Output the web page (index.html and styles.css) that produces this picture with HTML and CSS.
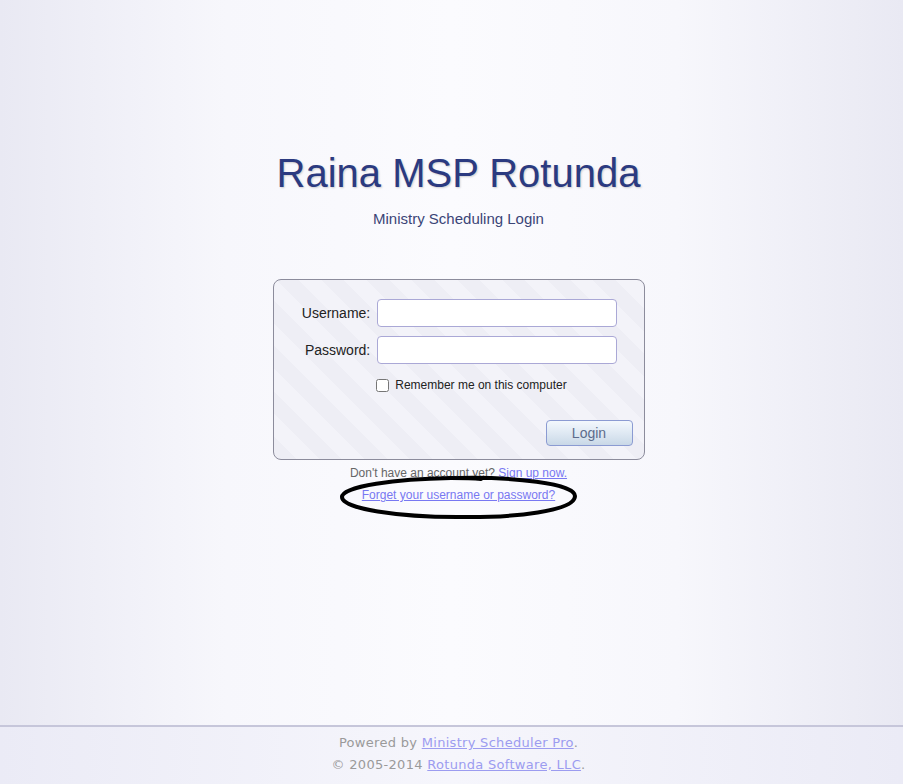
FILE: index.html
```html
<!DOCTYPE html>
<html>
<head>
    <meta charset="UTF-8">
    <title>Raina MSP Rotunda - Ministry Scheduling Login</title>
    <link rel="stylesheet" href="styles.css">
</head>
<body>
    <div class="pagina">
        <h1 class="titulo">Raina MSP Rotunda</h1>
        <p class="subtitulo">Ministry Scheduling Login</p>

        <!-- Caja de inicio de sesión -->
        <form class="caja-login" action="#" method="post">
            <div class="campos">
                <label class="etiqueta" for="usuario">Username:</label>
                <input class="entrada" type="text" id="usuario" name="usuario">

                <label class="etiqueta" for="clave">Password:</label>
                <input class="entrada" type="password" id="clave" name="clave">

                <label class="recordar">
                    <input type="checkbox" name="recordar">
                    <span>Remember me on this computer</span>
                </label>
            </div>
            <div class="acciones">
                <button class="boton-login" type="button">Login</button>
            </div>
        </form>

        <div class="enlaces">
            <div>Don't have an account yet? <a href="#">Sign up now.</a></div>
            <div class="olvido">
                <a href="#">Forget your username or password?</a>
                <!-- Círculo dibujado a mano sobre el enlace -->
                <svg class="marca" width="240" height="46" viewBox="0 0 240 46">
                    <path d="M120 3 C 172 2, 236 8, 236 21 C 236 36, 176 43, 118 42 C 60 42, 3 34, 3 22 C 3 11, 58 4, 112 3 C 122 3, 132 3, 142 4"
                          fill="none" stroke="#000" stroke-width="4" stroke-linecap="round"/>
                </svg>
            </div>
        </div>
    </div>

    <div class="pie">
        <div>Powered by <a href="#">Ministry Scheduler Pro</a>.</div>
        <div>&copy; 2005-2014 <a href="#">Rotunda Software, LLC</a>.</div>
    </div>
</body>
</html>
```

FILE: styles.css
```css
html, body {
    margin: 0;
    padding: 0;
}

body {
    font-family: Arial, "Liberation Sans", sans-serif;
    background: linear-gradient(to right, #e9e9f3 0%, #f7f7fc 25%, #fbfbfe 50%, #f7f7fc 75%, #e9e9f3 100%);
    min-height: 784px;
    display: flex;
    flex-direction: column;
}

.pagina {
    height: 725px;
    padding-top: 150px;
    padding-left: 14px;
    box-sizing: border-box;
    display: flex;
    flex-direction: column;
    align-items: center;
}

.titulo {
    margin: 0;
    font-size: 40px;
    line-height: 46px;
    font-weight: normal;
    color: #2b3a80;
    text-shadow: 1px 1px 2px rgba(0, 0, 0, 0.18);
}

.subtitulo {
    margin: 14px 0 0 0;
    font-size: 15px;
    line-height: 18px;
    color: #3b4577;
}

.caja-login {
    margin-top: 51px;
    width: 372px;
    height: 181px;
    box-sizing: border-box;
    border: 1px solid #8c8c9c;
    border-radius: 8px;
    padding: 19px 11px 13px 11px;
    background: repeating-linear-gradient(45deg, #eeeef5 0px, #eeeef5 16px, #f3f3f9 16px, #f3f3f9 32px);
    display: flex;
    flex-direction: column;
}

.campos {
    display: grid;
    grid-template-columns: auto 240px;
    column-gap: 7px;
    row-gap: 9px;
    justify-content: center;
    align-items: center;
    margin-left: 2px;
}

.etiqueta {
    font-size: 14px;
    color: #222;
    text-align: right;
}

.entrada {
    width: 240px;
    height: 28px;
    box-sizing: border-box;
    margin: 0;
    border: 1px solid #aaa8d6;
    border-radius: 4px;
    background-color: #fff;
    font-size: 14px;
}

.recordar {
    grid-column: 2;
    display: flex;
    align-items: center;
    margin-top: 5px;
    margin-left: -1px;
    font-size: 12px;
    color: #222;
}

.recordar input {
    width: 13px;
    height: 13px;
    margin: 0 6px 0 0;
}

.acciones {
    margin-top: auto;
    display: flex;
    justify-content: flex-end;
}

.boton-login {
    width: 87px;
    height: 26px;
    border: 1px solid #8b9bd2;
    border-radius: 4px;
    background: linear-gradient(to bottom, #f3f8fd 0%, #dfe9f3 50%, #c9d8e7 100%);
    color: #5c6c8c;
    font-family: Arial, "Liberation Sans", sans-serif;
    font-size: 14px;
    cursor: pointer;
}

.enlaces {
    margin-top: 2px;
    text-align: center;
    font-size: 12px;
    line-height: 22px;
    color: #666;
}

.enlaces a {
    color: #7878f2;
}

.olvido {
    position: relative;
}

.marca {
    position: absolute;
    left: 50%;
    top: -9px;
    margin-left: -119px;
    pointer-events: none;
}

.pie {
    flex: 1;
    border-top: 2px solid #c6c6da;
    padding-top: 5px;
    padding-left: 14px;
    text-align: center;
    font-family: "DejaVu Sans", Verdana, sans-serif;
    font-size: 13px;
    letter-spacing: 0.3px;
    line-height: 22px;
    color: #9a9a9a;
    background: linear-gradient(to right, #ebebf6 0%, #f6f6fc 50%, #ebebf6 100%);
}

.pie a {
    color: #9c9cf0;
}
```
